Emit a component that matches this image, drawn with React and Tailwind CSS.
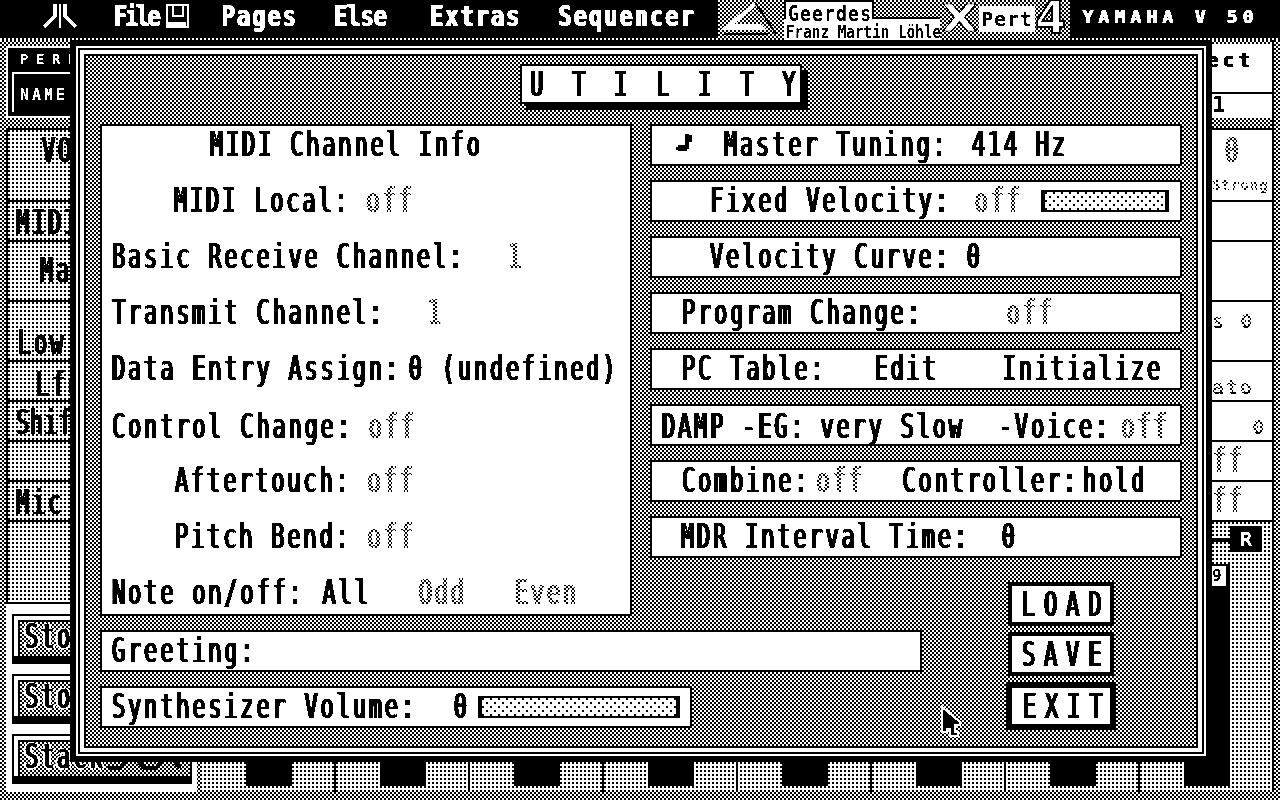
import React from 'react';

// 2px dither patterns of the old monochrome screen
const checker = "bg-[image:conic-gradient(#000_25%,#fff_0_50%,#000_0_75%,#fff_0)] bg-[length:4px_4px]";
const dots = "bg-white bg-[image:radial-gradient(circle_at_1px_1px,#000_1.4px,transparent_1.5px)] bg-[length:4px_4px]";
const sparse = "bg-white bg-[image:radial-gradient(circle_at_1px_1px,#000_1.4px,transparent_1.5px),radial-gradient(circle_at_1px_1px,#000_1.4px,transparent_1.5px)] bg-[length:8px_8px] bg-[position:0_0,4px_4px]";

const base = "inline-block h-6 leading-6 whitespace-pre font-['DejaVu_Sans_Mono',monospace] text-[22px] text-black scale-y-150 translate-y-[1.5px] [text-shadow:2px_0_0_#000]";
const menu = "inline-block h-6 leading-6 whitespace-pre font-['DejaVu_Sans_Mono',monospace] font-bold text-[22px] text-white scale-y-[1.3] translate-y-px [text-shadow:1.5px_0_0_#fff]";
const small = "inline-block whitespace-pre font-['DejaVu_Sans_Mono',monospace] font-bold text-black";

function T({ children, className = '' }) {
  return <span className={`${base} tracking-[2.8px] ${className}`}>{children}</span>;
}

// greyed out value: black text with a checker screened over it
function Dim({ children, className = '' }) {
  return (
    <span className={`relative inline-block h-6 ${className}`}>
      <span className={`${base} tracking-[2.8px]`}>{children}</span>
      <span className={`absolute inset-x-0 -inset-y-1 mix-blend-screen ${checker}`} />
    </span>
  );
}

function SmallDim({ children, className = '' }) {
  return (
    <span className={`relative inline-block h-4 ${className}`}>
      <span className={`${small} text-[20px] leading-4 tracking-[2px]`}>{children}</span>
      <span className={`absolute inset-0 mix-blend-screen ${checker}`} />
    </span>
  );
}

function Row({ pl, children }) {
  return <div className={`h-[42px] border-2 border-black bg-white flex items-start pt-[6px] ${pl}`}>{children}</div>;
}

function Slider({ className }) {
  return <div className={`h-[22px] border-x-4 border-y-2 border-black ${sparse} ${className}`} />;
}

function MenuBar() {
  return (
    <div className="h-[38px] bg-black flex items-start pt-[4px]">
      <svg className="ml-[42px] w-[36px] h-[24px]" viewBox="0 0 36 24" fill="none" stroke="#fff">
        <path d="M13 0V12L2 23" strokeWidth="4" />
        <path d="M18 0V24" strokeWidth="2" />
        <path d="M23 0V12L34 23" strokeWidth="4" />
      </svg>
      <span className={`${menu} ml-[35px] tracking-[-2px]`}>File</span>
      <svg className="ml-[8px] w-[24px] h-[24px]" viewBox="0 0 24 24" fill="none" stroke="#fff" strokeWidth="2">
        <path d="M1 1H22V23H1Z" />
        <path d="M7 1V12H17V1" />
        <path d="M1 20H20" strokeWidth="4" />
      </svg>
      <span className={`${menu} ml-[31px] tracking-[2px]`}>Pages</span>
      <span className={`${menu} ml-[36px]`}>Else</span>
      <span className={`${menu} ml-[43px] tracking-[2px]`}>Extras</span>
      <span className={`${menu} ml-[37px] tracking-[2px]`}>Sequencer</span>
      <div className={`relative -mt-[4px] ml-[23px] w-[352px] h-[38px] flex ${checker}`}>
        <svg className="w-[66px] h-[36px]" viewBox="0 0 66 36">
          <path d="M37 2L2 30H48L43 24H16L37 7Z" fill="#fff" />
          <path d="M37 2L58 34M6 34H50" fill="none" stroke="#000" strokeWidth="2" />
        </svg>
        <div className="w-[156px] h-[36px] flex flex-col">
          <div className="h-[19px] flex">
            <div className="w-[90px] bg-white border-t-2 border-x-2 border-black pl-[2px]">
              <span className="inline-block leading-[16px] whitespace-pre font-['DejaVu_Sans_Mono',monospace] font-bold text-[18px] tracking-[1.2px] text-black scale-y-[1.15]">Geerdes</span>
            </div>
            <div className="flex-1 border-b-2 border-black" />
          </div>
          <div className="flex-1 bg-white pl-[2px]">
            <span className="inline-block leading-[16px] whitespace-pre font-['DejaVu_Sans_Mono',monospace] font-bold text-[14px] tracking-[0.2px] text-black scale-y-[1.2]">Franz Martin Löhle</span>
          </div>
        </div>
        <span className="ml-[5px] h-[36px] leading-[36px] font-['DejaVu_Sans',sans-serif] font-bold text-[38px] text-white scale-x-[1.2] [-webkit-text-stroke:1px_#000]">X</span>
        <span className="ml-[5px] mt-[6px] h-[26px] px-[2px] bg-white leading-[26px] whitespace-pre font-['DejaVu_Sans_Mono',monospace] font-bold text-[20px] tracking-[0.8px] text-black">Pert</span>
        <span className="ml-[1px] h-[36px] leading-[36px] font-['DejaVu_Sans',sans-serif] font-bold text-[44px] text-white [-webkit-text-stroke:2px_#000]">4</span>
      </div>
      <span className="ml-[12px] mt-[4px] inline-block leading-[18px] whitespace-pre font-['DejaVu_Sans_Mono',monospace] font-bold text-[18px] tracking-[5.2px] text-white [text-shadow:1px_0_0_#fff]">YAMAHA V 50</span>
    </div>
  );
}

function Sto({ text, children }) {
  return (
    <div className="relative w-[180px] h-[50px] border-l-2 border-t-2 border-r-2 border-b-[8px] border-black bg-white pl-[4px] pt-[4px]">
      <div className={`h-full border-l-2 border-t-2 border-black pl-[4px] pt-[2px] ${checker}`}>
        <span className="inline-block h-6 leading-6 whitespace-pre font-['DejaVu_Sans_Mono',monospace] text-[22px] tracking-[2.8px] text-black scale-y-150 translate-y-[1.5px] [text-shadow:2px_0_0_#000,-2px_0_0_#fff,4px_0_0_#fff,0_-1px_0_#fff,0_1px_0_#fff]">{text}</span>
      </div>
      {children}
    </div>
  );
}

function LeftColumn() {
  return (
    <div className="w-[194px] flex flex-col pt-[6px]">
      <div className="h-[72px] w-full bg-black border-2 border-white pl-[12px] pt-[4px]">
        <span className="block leading-[14px] font-['DejaVu_Sans_Mono',monospace] font-bold text-[14px] tracking-[7.6px] text-white">PERF</span>
        <div className="mt-[6px] -ml-[8px] h-[40px] border-l-2 border-t-2 border-white pl-[6px] pt-[14px]">
          <span className="block leading-[14px] font-['DejaVu_Sans_Mono',monospace] font-bold text-[15px] tracking-[3px] text-white">NAME</span>
        </div>
      </div>
      <div className="mt-[10px] border-l-2 border-t-2 border-black flex flex-col">
        <div className={`h-[72px] border-b-2 border-black pt-[8px] pl-[33px] ${dots}`}><T>VOICE</T></div>
        <div className={`h-[40px] border-b-2 border-black pt-[8px] pl-[7px] ${dots}`}><T>MIDI</T></div>
        <div className={`h-[60px] border-b-2 border-black pt-[16px] pl-[31px] ${dots}`}><T>Main</T></div>
        <div className={`h-[60px] border-b-2 border-black pt-[28px] pl-[9px] ${dots}`}><T>Low</T></div>
        <div className={`h-[40px] border-b-2 border-black pt-[10px] pl-[27px] ${dots}`}><T>Lfo</T></div>
        <div className={`h-[40px] border-b-2 border-black pt-[8px] pl-[7px] ${dots}`}><span className={`${base} tracking-[0.8px]`}>Shift</span></div>
        <div className={`h-[40px] border-b-2 border-black ${dots}`} />
        <div className={`h-[40px] border-b-2 border-black pt-[8px] pl-[7px] ${dots}`}><T>Mic</T></div>
        <div className={`h-[82px] border-b-2 border-black ${dots}`} />
      </div>
      <div className="flex-1 mr-[3px] bg-white pl-[6px] pt-[10px] flex flex-col gap-[10px]">
        <Sto text="Sto" />
        <Sto text="Sto" />
        <Sto text="Stack">
          <svg className="absolute left-[94px] top-[16px] w-[76px] h-[20px]" viewBox="0 0 76 20" fill="none" stroke="#000" strokeWidth="4">
            <path d="M0 16H12L24 2L36 16H48L60 2L72 16" />
          </svg>
        </Sto>
      </div>
    </div>
  );
}

function RightColumn() {
  return (
    <div className="w-[60px] h-full flex flex-col pt-[4px]">
      <div className="h-[74px] bg-white flex flex-col">
        <div className="relative h-[50px] border-b-2 border-black pt-[8px]">
          <span className="block -ml-[6px] leading-[16px] whitespace-pre font-['DejaVu_Sans_Mono',monospace] font-bold text-[20px] tracking-[4px] text-black [text-shadow:1px_0_0_#000]">ect</span>
          <span className="block -ml-[7px] mt-[3px] leading-[12px] font-['DejaVu_Sans_Mono',monospace] font-bold text-[13px] text-black">F</span>
        </div>
        <div className="h-[24px] pt-[1px]">
          <span className="block leading-[20px] font-['DejaVu_Sans_Mono',monospace] font-bold text-[22px] text-black">1</span>
        </div>
      </div>
      <div className="h-[10px]" />
      <div className="h-[394px] bg-white border-t-2 border-black flex flex-col">
        <div className="h-[72px] border-b-2 border-black relative pl-[12px] pt-[8px]">
          <Dim>0</Dim>
          <span className={`${small} absolute left-0 top-[48px] text-[14px] leading-[14px] tracking-[1px]`}>Strong</span>
          <span className={`absolute inset-x-0 top-[48px] h-[14px] mix-blend-screen ${checker}`} />
        </div>
        <div className="h-[40px] border-b-2 border-black" />
        <div className="h-[60px] border-b-2 border-black" />
        <div className="h-[60px] border-b-2 border-black flex pt-[8px]">
          <SmallDim>s</SmallDim>
          <SmallDim className="ml-[14px]">0</SmallDim>
        </div>
        <div className="h-[40px] border-b-2 border-black pt-[14px]">
          <SmallDim>ato</SmallDim>
        </div>
        <div className="h-[40px] border-b-2 border-black pl-[40px] pt-[14px]">
          <SmallDim>0</SmallDim>
        </div>
        <div className="h-[40px] border-b-2 border-black pt-[6px]">
          <Dim>ff</Dim>
        </div>
        <div className="h-[40px] border-b-2 border-black pt-[6px]">
          <Dim>ff</Dim>
        </div>
      </div>
      <div className={`flex-1 flex flex-col ${dots}`}>
        <div className="h-[42px] pt-[4px] pl-[18px] relative">
          <div className="absolute left-0 top-[16px] w-[20px] h-[4px] bg-black" />
          <div className="relative w-[32px] h-[26px] bg-black flex items-center justify-center font-['DejaVu_Sans_Mono',monospace] font-bold text-[20px] text-white">R</div>
        </div>
        <div className="w-[18px] flex-1 bg-black pt-[2px] pr-[4px]">
          <div className="h-[20px] bg-white font-['DejaVu_Sans_Mono',monospace] font-bold text-[16px] leading-[20px] text-black">9</div>
        </div>
      </div>
    </div>
  );
}

function Keyboard() {
  const groups = [0, 1, 2, 3, 4, 5, 6];
  return (
    <div className={`h-[30px] flex ${dots}`}>
      <div className="w-[46px]" />
      <div className="w-[46px] h-[24px] bg-black" />
      {groups.map((g) => (
        <React.Fragment key={g}>
          <div className="w-[44px] border-r-2 border-black" />
          <div className="w-[44px]" />
          <div className="w-[46px] h-[24px] bg-black" />
        </React.Fragment>
      ))}
    </div>
  );
}

function Utility() {
  return (
    <div className="absolute left-[70px] top-[40px] w-[1142px] h-[722px] border-[6px] border-black bg-white p-[2px]">
      <div className="h-full bg-black p-[2px]">
        <div className="h-full bg-white p-[4px]">
          <div className="h-full bg-black p-[2px]">
            <div className={`h-full px-[14px] pt-[8px] ${checker}`}>
              <div className="ml-[420px] w-[282px] h-[40px] border-2 border-black bg-white pt-[6px] pl-[7px] shadow-[6px_6px_0_#000]">
                <span className={`${base} tracking-[28.8px]`}>UTILITY</span>
              </div>
              <div className="mt-[20px] grid grid-cols-[532px_18px_272px_84px_110px_66px] grid-rows-[492px_42px_42px] gap-y-[14px]">
                <div className="col-start-1 row-start-1 border-2 border-black bg-white pt-[6px] flex flex-col">
                  <div className="h-6 pl-[107px]"><T>MIDI Channel Info</T></div>
                  <div className="h-6 mt-[32px] pl-[71px] flex"><T>MIDI Local: </T><Dim>off</Dim></div>
                  <div className="h-6 mt-[32px] pl-[9px] flex"><T>Basic Receive Channel:</T><Dim className="ml-[43px]">1</Dim></div>
                  <div className="h-6 mt-[32px] pl-[9px] flex"><T>Transmit Channel:</T><Dim className="ml-[43px]">1</Dim></div>
                  <div className="h-6 mt-[32px] pl-[9px] flex"><T>Data Entry Assign:</T><T className="ml-[8px]">0</T><T className="ml-[17px]">(undefined)</T></div>
                  <div className="h-6 mt-[34px] pl-[9px] flex"><T>Control Change: </T><Dim>off</Dim></div>
                  <div className="h-6 mt-[30px] pl-[72px] flex"><T>Aftertouch: </T><Dim>off</Dim></div>
                  <div className="h-6 mt-[32px] pl-[72px] flex"><T>Pitch Bend: </T><Dim>off</Dim></div>
                  <div className="h-6 mt-[32px] pl-[9px] flex"><T>Note on/off:</T><T className="ml-[18px]">All</T><Dim className="ml-[48px]">Odd</Dim><Dim className="ml-[48px]">Even</Dim></div>
                </div>

                <div className="col-start-3 col-span-4 row-start-1 flex flex-col gap-[14px]">
                  <Row pl="pl-[24px]">
                    <svg className="w-[16px] h-[18px] mt-[2px]" viewBox="0 0 16 18" fill="#000">
                      <path d="M2 11H9V0H13V1H16V8H13V3V15H11V17H2V16H0V13H2Z" />
                    </svg>
                    <T className="ml-[31px]">Master Tuning:</T><T className="ml-[23px]">414 Hz</T>
                  </Row>
                  <Row pl="pl-[57px]">
                    <T>Fixed Velocity:</T><Dim className="ml-[24px]">off</Dim><Slider className="ml-[19px] mt-[2px] w-[128px]" />
                  </Row>
                  <Row pl="pl-[57px]"><T>Velocity Curve: 0</T></Row>
                  <Row pl="pl-[29px]"><T>Program Change:</T><Dim className="ml-[84px]">off</Dim></Row>
                  <Row pl="pl-[29px]"><T>PC Table:</T><T className="ml-[48px]">Edit</T><T className="ml-[64px]">Initialize</T></Row>
                  <Row pl="pl-[9px] !pt-[8px]"><T>DAMP -EG:</T><T className="ml-[14px]">very Slow</T><T className="ml-[34px]">-Voice:</T><Dim className="ml-[10px]">off</Dim></Row>
                  <Row pl="pl-[29px]"><T>Combine:</T><Dim className="ml-[6px]">off</Dim><T className="ml-[38px]">Controller:</T><T className="ml-[4px]">hold</T></Row>
                  <Row pl="pl-[28px]"><T>MDR Interval Time:</T><T className="ml-[32px]">0</T></Row>
                </div>

                <div className="col-start-1 col-span-3 row-start-2">
                  <Row pl="pl-[9px]"><T>Greeting:</T></Row>
                </div>
                <div className="col-start-1 col-span-3 row-start-3 w-[592px]">
                  <Row pl="pl-[9px]"><T>Synthesizer Volume:</T><T className="ml-[37px]">0</T><Slider className="ml-[9px] mt-[2px] w-[202px]" /></Row>
                </div>

                <div className="col-start-5 row-start-1 row-span-3 self-end -mb-[2px] flex flex-col items-center gap-[6px]">
                  <div className="w-[106px] h-[44px] border-4 border-black bg-white pt-[6px] pl-[9px]">
                    <span className={`${base} tracking-[8.8px]`}>LOAD</span>
                  </div>
                  <div className="w-[106px] h-[44px] border-4 border-black bg-white pt-[6px] pl-[9px]">
                    <span className={`${base} tracking-[8.8px]`}>SAVE</span>
                  </div>
                  <div className="w-[110px] h-[48px] border-[6px] border-black bg-white pt-[6px] pl-[10px]">
                    <span className={`${base} tracking-[8.8px]`}>EXIT</span>
                  </div>
                </div>
              </div>
            </div>
          </div>
        </div>
      </div>
    </div>
  );
}

export default function App() {
  return (
    <div className={`relative w-[1280px] h-[800px] overflow-hidden contrast-[30] ${checker}`}>
      <MenuBar />
      <div className="h-[2px] bg-[image:linear-gradient(to_right,#fff_2px,#000_2px)] bg-[length:4px_2px]" />
      <div className="h-[752px] flex pl-[6px]">
        <LeftColumn />
        <div className="w-[1074px] flex flex-col border-r-2 border-black">
          <div className="flex-1 min-h-0 flex justify-end">
            <RightColumn />
          </div>
          <Keyboard />
        </div>
      </div>
      <Utility />
      {/* mouse pointer */}
      <svg className="absolute left-[939px] top-[704px] w-[24px] h-[36px]" viewBox="0 0 24 36">
        <path d="M3 3V28H8V25H11V32H19V28H16V21H21V18Z" fill="#000" stroke="#fff" strokeWidth="2" />
      </svg>
    </div>
  );
}
